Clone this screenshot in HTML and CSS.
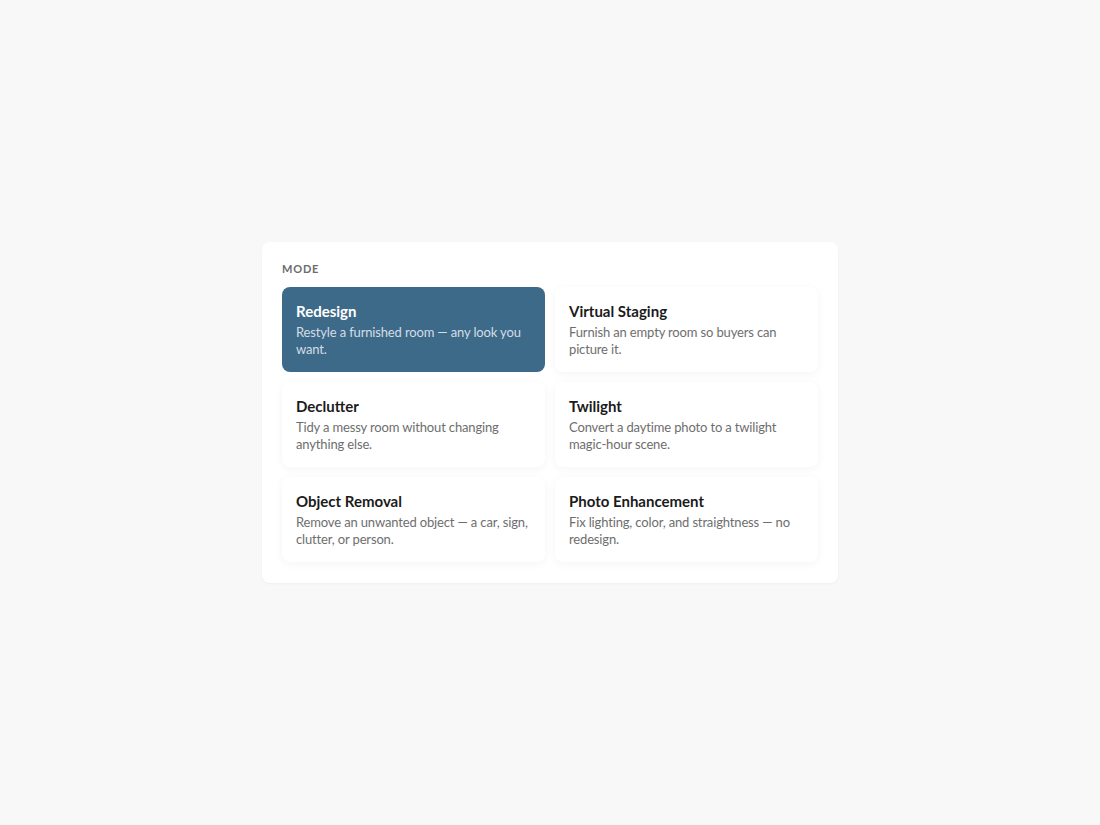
FILE: index.html
```html
<!DOCTYPE html>
<html>
<head>
<meta charset="utf-8">
<link rel="stylesheet" href="styles.css">
</head>
<body>
<div class="page">
  <section class="panel">
    <div class="label">MODE</div>
    <div class="grid">
      <div class="card selected">
        <div class="title">Redesign</div>
        <div class="desc">Restyle a furnished room — any look you want.</div>
      </div>
      <div class="card">
        <div class="title">Virtual Staging</div>
        <div class="desc">Furnish an empty room so buyers can picture it.</div>
      </div>
      <div class="card">
        <div class="title">Declutter</div>
        <div class="desc">Tidy a messy room without changing anything else.</div>
      </div>
      <div class="card">
        <div class="title">Twilight</div>
        <div class="desc">Convert a daytime photo to a twilight magic-hour scene.</div>
      </div>
      <div class="card">
        <div class="title">Object Removal</div>
        <div class="desc">Remove an unwanted object — a car, sign, clutter, or person.</div>
      </div>
      <div class="card">
        <div class="title">Photo Enhancement</div>
        <div class="desc">Fix lighting, color, and straightness — no redesign.</div>
      </div>
    </div>
  </section>
</div>
</body>
</html>
```

FILE: styles.css
```css
html, body {
  margin: 0;
  padding: 0;
  background: #f8f8f8;
  font-family: "Lato", "Noto Sans", sans-serif;
}
.page {
  height: 825px;
  display: flex;
  align-items: center;
  justify-content: center;
}
.panel {
  width: 536px;
  padding: 20px 20px 21px;
  background: #ffffff;
  border-radius: 8px;
  box-shadow: 0 1px 3px rgba(0,0,0,0.04);
}
.label {
  font-size: 11px;
  line-height: 14px;
  font-weight: 700;
  letter-spacing: 0.8px;
  color: #6c6c6c;
  margin-top: 0;
  margin-bottom: 11px;
}
.grid {
  display: grid;
  grid-template-columns: 1fr 1fr;
  gap: 10px;
}
.card {
  background: #ffffff;
  border-radius: 8px;
  padding: 14px;
  height: 57px;
  box-shadow: 0 2px 10px rgba(0,0,0,0.045);
}
.title {
  font-size: 15px;
  line-height: 20px;
  font-weight: 700;
  color: #1b1b1b;
  margin-bottom: 3px;
}
.desc {
  font-size: 13px;
  line-height: 17px;
  letter-spacing: -0.15px;
  color: #6e6e6e;
}
.card.selected {
  background: #3e6a89;
  box-shadow: none;
}
.card.selected .title {
  color: #ffffff;
}
.card.selected .desc {
  color: #d3dde6;
}
```
